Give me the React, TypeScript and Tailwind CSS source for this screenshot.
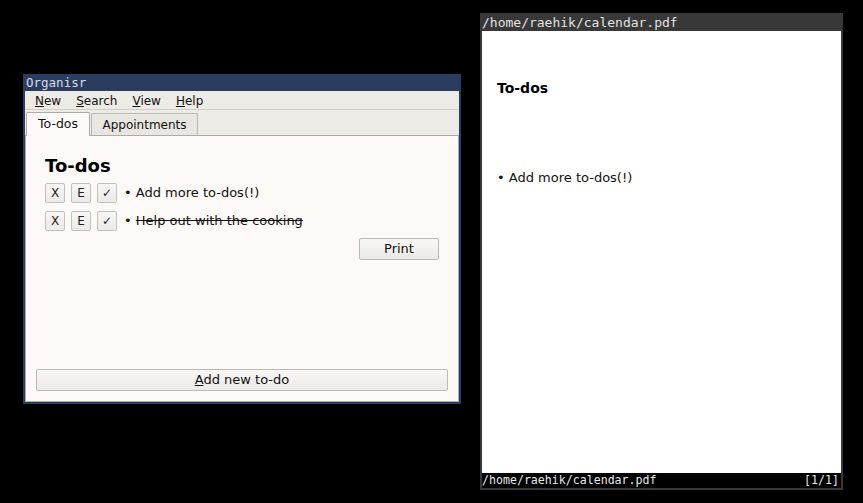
import React from "react";

const sans = { fontFamily: '"DejaVu Sans", "Noto Sans", sans-serif' };
const mono = { fontFamily: '"DejaVu Sans Mono", "Liberation Mono", monospace' };

function SmallBtn({ label }: { label: string }) {
  return (
    <div className="w-[20px] h-[20px] flex items-center justify-center border border-[#c3c0bb] rounded-[2px] bg-gradient-to-b from-[#f8f7f5] to-[#eceae6] text-[12px] text-[#222]">
      {label}
    </div>
  );
}

function Row({ text, done }: { text: string; done?: boolean }) {
  return (
    <div className="flex items-center gap-[6px] h-[20px]">
      <SmallBtn label="X" />
      <SmallBtn label="E" />
      <SmallBtn label="✓" />
      <div className="text-[13px] text-[#111] ml-[1px]">
        • <span className={done ? "line-through" : ""}>{text}</span>
      </div>
    </div>
  );
}

export default function App() {
  return (
    <div className="relative w-[863px] h-[503px] bg-black overflow-hidden" style={sans}>
      {/* Organisr window */}
      <div className="absolute left-[23px] top-[74px] w-[438px] h-[330px] bg-[#2b3d5e] p-[2px] flex flex-col">
        <div className="h-[15px] flex items-center pl-[1px] text-[12.5px] leading-none text-[#d6dceb]" style={mono}>
          Organisr
        </div>
        <div className="flex-1 flex flex-col bg-[#edebe6]">
          <div className="h-[19px] flex items-center gap-[15px] pl-[10px] pt-[2px] text-[12px] text-[#111] border-b border-[#d3cfc9]">
            <span><span className="underline">N</span>ew</span>
            <span><span className="underline">S</span>earch</span>
            <span><span className="underline">V</span>iew</span>
            <span><span className="underline">H</span>elp</span>
          </div>
          <div className="h-[25px] flex items-end pl-[1px] relative z-10">
            <div className="h-[24px] w-[64px] flex items-center justify-center bg-[#fcf9f6] border border-b-0 border-[#aeaaa4] rounded-t-[2px] text-[12.5px] text-[#111] -mb-[1px] pb-[1px]">
              To-dos
            </div>
            <div className="h-[22px] w-[107px] flex items-center justify-center bg-[#e9e6e1] border border-b-0 border-[#bcb8b2] rounded-t-[2px] text-[12px] text-[#111] ml-[1px]">
              Appointments
            </div>
          </div>
          <div className="flex-1 flex flex-col bg-[#fcf9f6] border border-[#aeaaa4]">
            <div className="pl-[19px] pt-[19px] pr-[19px] flex flex-col">
              <div className="text-[18px] font-bold leading-[22px] text-black">To-dos</div>
              <div className="flex flex-col gap-[8px] mt-[6px]">
                <Row text="Add more to-dos(!)" />
                <Row text="Help out with the cooking" done />
              </div>
              <div className="flex justify-end mt-[7px]">
                <div className="w-[80px] h-[22px] flex items-center justify-center border border-[#bcb8b2] rounded-[2px] bg-gradient-to-b from-[#f8f7f5] to-[#eceae6] text-[13px] text-[#111]">
                  Print
                </div>
              </div>
            </div>
            <div className="flex-1" />
            <div className="mx-[10px] mb-[10px] h-[22px] flex items-center justify-center border border-[#bcb8b2] rounded-[2px] bg-gradient-to-b from-[#f8f7f5] to-[#eceae6] text-[13px] text-[#111]">
              <span><span className="underline">A</span>dd new to-do</span>
            </div>
          </div>
        </div>
      </div>

      {/* PDF viewer window */}
      <div className="absolute left-[480px] top-[13px] w-[363px] h-[477px] bg-[#383838] px-[2px] pb-[2px] flex flex-col">
        <div className="h-[18px] flex items-center text-[13px] leading-none text-[#e2e2e2]" style={mono}>
          /home/raehik/calendar.pdf
        </div>
        <div className="flex-1 bg-white pl-[15px] flex flex-col">
          <div className="mt-[49px] text-[14px] font-bold text-black leading-[16px]">To-dos</div>
          <div className="mt-[74px] text-[13px] text-[#111] leading-[16px]">• Add more to-dos(!)</div>
        </div>
        <div className="h-[15px] bg-black flex items-center justify-between text-[11.6px] leading-none text-[#e8e8e8]" style={mono}>
          <span>/home/raehik/calendar.pdf</span>
          <span className="pr-[2px]">[1/1]</span>
        </div>
      </div>
    </div>
  );
}
